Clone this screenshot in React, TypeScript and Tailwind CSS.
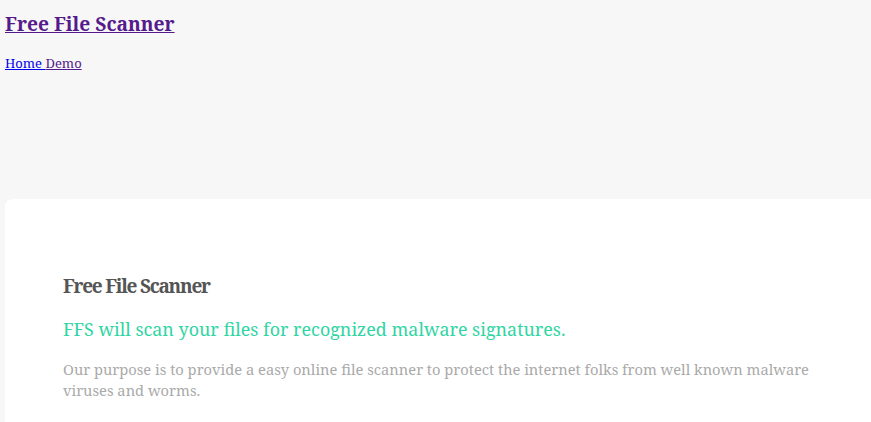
export default function App() {
  return (
    <div className="min-h-[422px] bg-[#f7f7f7] overflow-hidden font-['Noto_Serif',serif]">
      <header className="px-[5px] pt-[10px]">
        <h1 className="text-[19.2px] font-bold leading-[28px]">
          <a href="#" className="text-[#551a8b] underline">Free File Scanner</a>
        </h1>
        <nav className="mt-[16px] text-[13px] leading-[18px]">
          <a href="#" className="text-[#0000ee] underline">Home </a>
          <a href="#" className="text-[#551a8b] underline">Demo</a>
        </nav>
      </header>
      <main className="mt-[127px] ml-[5px] bg-white rounded-tl-[8px] pl-[58px] pr-[50px] pt-[73px] pb-[40px]">
        <h2 className="text-[19px] font-bold text-[#555] tracking-[-1.25px] leading-[28px]">Free File Scanner</h2>
        <p className="mt-[15px] text-[17.9px] text-[#2fd5a3] leading-[28px]">FFS will scan your files for recognized malware signatures.</p>
        <p className="mt-[16px] text-[14.7px] text-[#aaaaaa] leading-[21px]">
          Our purpose is to provide a easy online file scanner to protect the internet folks from well known malware viruses and worms.
        </p>
      </main>
    </div>
  );
}
